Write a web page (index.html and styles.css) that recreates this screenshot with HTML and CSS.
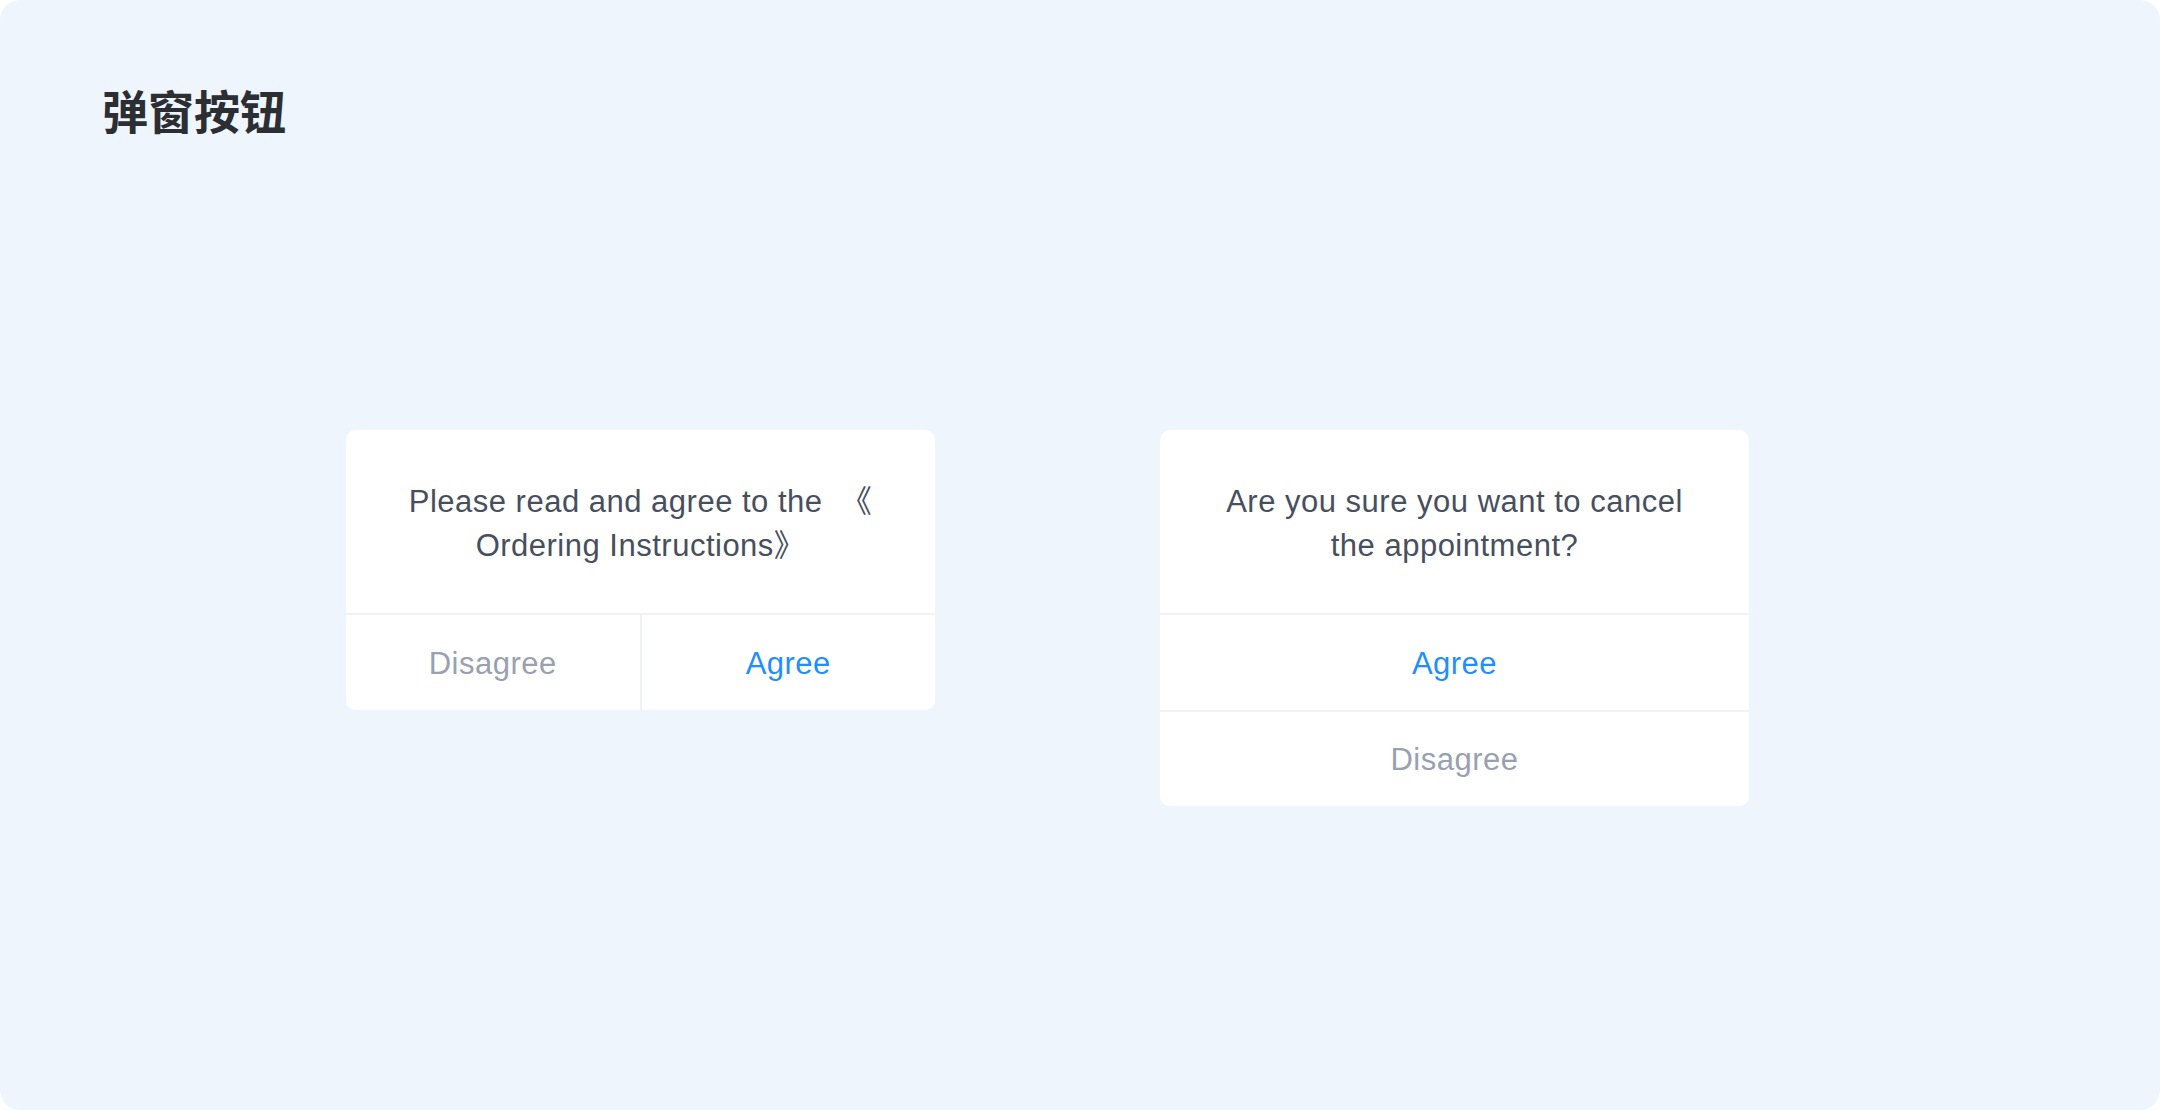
FILE: index.html
```html
<!DOCTYPE html>
<html lang="zh-CN">
<head>
    <meta charset="UTF-8">
    <meta name="viewport" content="width=device-width, initial-scale=1.0">
    <title>弹窗按钮</title>
    <link rel="stylesheet" href="styles.css">
</head>
<body>
    <div class="page">
        <h1 class="page-title">弹窗按钮</h1>

        <div class="dialogs">
            <!-- Two buttons side by side -->
            <div class="dialog">
                <div class="dialog-body">
                    Please read and agree to the &nbsp;《<br>Ordering Instructions》
                </div>
                <div class="dialog-actions row">
                    <button class="btn btn-cancel">Disagree</button>
                    <button class="btn btn-ok">Agree</button>
                </div>
            </div>

            <!-- Two buttons stacked -->
            <div class="dialog">
                <div class="dialog-body">
                    Are you sure you want to cancel<br>the appointment?
                </div>
                <div class="dialog-actions column">
                    <button class="btn btn-ok">Agree</button>
                    <button class="btn btn-cancel">Disagree</button>
                </div>
            </div>
        </div>
    </div>
</body>
</html>
```

FILE: styles.css
```css
/* Basic Styles */
html, body {
    margin: 0;
    padding: 0;
    height: 100%;
    background: #fff;
}

body {
    font-family: "Liberation Sans", "Noto Sans CJK SC", sans-serif;
}

/* Page */
.page {
    box-sizing: border-box;
    height: 100vh;
    background: #eff5fc;
    border-radius: 20px;
    padding: 82px 0 0 102px;
}

.page-title {
    margin: 0;
    font-family: "Noto Sans CJK SC", sans-serif;
    font-size: 46px;
    line-height: 54px;
    font-weight: 700;
    color: #2b2e33;
}

/* Dialogs */
.dialogs {
    display: flex;
    align-items: flex-start;
    gap: 225px;
    margin: 294px 0 0 244px;
}

.dialog {
    width: 589px;
    background: #fff;
    border-radius: 10px;
    overflow: hidden;
}

.dialog-body {
    height: 183px;
    box-sizing: border-box;
    display: flex;
    align-items: center;
    justify-content: center;
    text-align: center;
    padding: 4px 20px 0;
    font-size: 31px;
    line-height: 44px;
    letter-spacing: 0.5px;
    color: #474f5f;
}

/* Buttons */
.dialog-actions {
    display: flex;
    border-top: 2px solid #f1f2f4;
}

.dialog-actions.column {
    flex-direction: column;
}

.btn {
    height: 95px;
    margin: 0;
    padding: 2px 0 0;
    border: none;
    background: #fff;
    font-family: "Liberation Sans", sans-serif;
    font-size: 31px;
    letter-spacing: 0.5px;
    cursor: pointer;
}

.row .btn {
    flex: 1;
}

.row .btn + .btn {
    border-left: 2px solid #f1f2f4;
}

.column .btn + .btn {
    height: 96px;
    border-top: 2px solid #f1f2f4;
}

.btn-ok {
    color: #1f8fff;
}

.btn-cancel {
    color: #99a0b0;
}
```
